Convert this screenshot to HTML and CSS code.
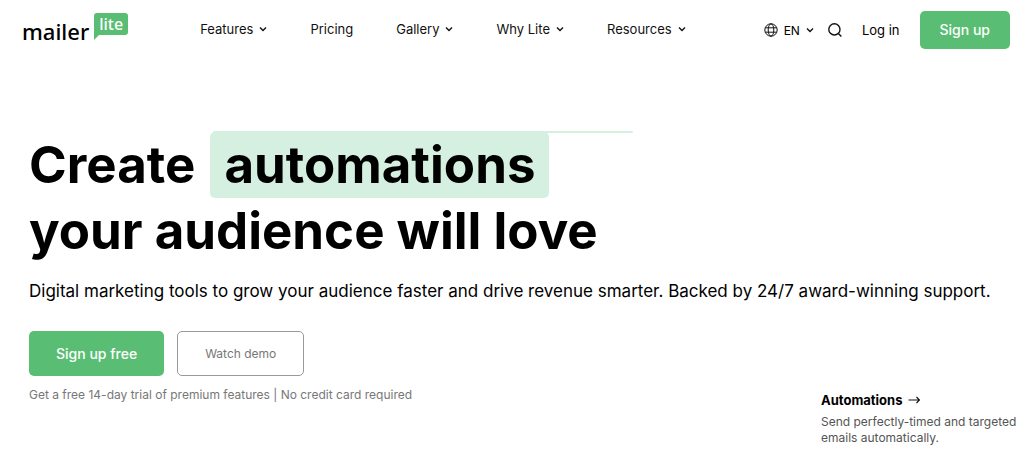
FILE: index.html
```html
<!DOCTYPE html>
<html lang="en">
<head>
    <meta charset="utf-8">
    <meta name="viewport" content="width=device-width, initial-scale=1">
    <title>MailerLite</title>
    <link rel="stylesheet" href="styles.css">
</head>
<body>
    <header class="topbar">
        <a class="logo" href="#">
            <span class="logo-name">mailer</span>
            <span class="logo-tag">lite</span>
        </a>
        <nav class="menu">
            <button class="menu-item" type="button">Features <svg class="chevron" viewBox="0 0 8 8"><path d="M1 2.5l3 3 3-3"/></svg></button>
            <a class="menu-item" href="#">Pricing</a>
            <button class="menu-item" type="button">Gallery <svg class="chevron" viewBox="0 0 8 8"><path d="M1 2.5l3 3 3-3"/></svg></button>
            <button class="menu-item" type="button">Why Lite <svg class="chevron" viewBox="0 0 8 8"><path d="M1 2.5l3 3 3-3"/></svg></button>
            <button class="menu-item" type="button">Resources <svg class="chevron" viewBox="0 0 8 8"><path d="M1 2.5l3 3 3-3"/></svg></button>
        </nav>
        <div class="tools">
            <button class="lang" type="button">
                <svg class="globe" viewBox="0 0 14 14"><circle cx="7" cy="7" r="6.2"/><ellipse cx="7" cy="7" rx="2.8" ry="6.2"/><path d="M1.3 4.8h11.4M1.3 9.2h11.4"/></svg>
                EN
                <svg class="chevron" viewBox="0 0 8 8"><path d="M1 2.5l3 3 3-3"/></svg>
            </button>
            <button class="search" type="button" aria-label="Search">
                <svg class="search-icon" viewBox="0 0 14 14"><circle cx="6.4" cy="6.4" r="5.6"/><path d="M10.4 10.4l3 3"/></svg>
            </button>
            <a class="login" href="#">Log in</a>
            <a class="btn btn-small" href="#">Sign up</a>
        </div>
    </header>

    <main class="hero">
        <h1 class="title">Create <span class="highlight">automations</span><br>your audience will love</h1>
        <p class="lead">Digital marketing tools to grow your audience faster and drive revenue smarter. Backed by 24/7 award-winning support.</p>
        <div class="actions">
            <a class="btn btn-large" href="#">Sign up free</a>
            <button class="btn-outline" type="button">Watch demo</button>
        </div>
        <div class="bottom">
            <p class="note">Get a free 14-day trial of premium features | No credit card required</p>
            <aside class="feature">
                <a class="feature-link" href="#">Automations
                    <svg class="arrow" viewBox="0 0 12 10"><path d="M0.5 5h11M8.5 2l3 3-3 3"/></svg>
                </a>
                <p class="feature-text">Send perfectly-timed and targeted emails automatically.</p>
            </aside>
        </div>
    </main>
</body>
</html>
```
FILE: styles.css
```css
* {
    box-sizing: border-box;
}
body {
    margin: 0;
    background: #fff;
    color: #000;
    font-family: Inter, "Liberation Sans", sans-serif;
    font-size: 14px;
}
a {
    color: inherit;
    text-decoration: none;
}
button {
    padding: 0;
    border: 0;
    background: none;
    color: inherit;
    font: inherit;
    cursor: pointer;
}
svg {
    flex: none;
    fill: none;
    stroke: #111;
}

/* top bar */
.topbar {
    display: flex;
    align-items: center;
    height: 60px;
    padding: 0 14px 0 22px;
}
.logo {
    display: flex;
    align-items: flex-end;
    gap: 5px;
    margin-right: 72px;
    padding-bottom: 4px;
    font-family: "Noto Sans", sans-serif;
    font-weight: 500;
}
.logo-name {
    font-size: 22px;
    line-height: 24px;
}
.logo-tag {
    position: relative;
    margin-bottom: 8px;
    padding: 0 5px;
    border-radius: 3px;
    background: #59be73;
    color: #fff;
    font-size: 16px;
    line-height: 22px;
}
.logo-tag::after {
    content: "";
    position: absolute;
    left: 0;
    bottom: -5px;
    border-top: 8px solid #59be73;
    border-right: 8px solid transparent;
}
.menu {
    display: flex;
    align-items: center;
    gap: 43px;
    padding-bottom: 2px;
    font-size: 13px;
}
.menu-item {
    display: flex;
    align-items: center;
    gap: 6px;
    color: #111;
}
.chevron {
    width: 8px;
    height: 8px;
    stroke-width: 1.4;
}
.tools {
    display: flex;
    align-items: center;
    margin-left: auto;
}
.lang {
    display: flex;
    align-items: center;
    gap: 6px;
    margin-right: 14px;
    font-size: 12px;
}
.globe {
    width: 14px;
    height: 14px;
}
.search {
    display: flex;
    margin-right: 20px;
}
.search-icon {
    width: 14px;
    height: 14px;
    stroke-width: 1.4;
}
.login {
    margin-right: 20px;
    font-size: 13px;
}

/* buttons */
.btn {
    border-radius: 5px;
    background: #59be73;
    color: #fff;
    font-weight: 500;
}
.btn-small {
    padding: 0 20px;
    line-height: 38px;
}
.btn-large {
    padding: 0 27px;
    line-height: 45px;
}
.btn-outline {
    padding: 0 27px;
    border: 1px solid #999;
    border-radius: 5px;
    color: #777;
    font-size: 12px;
}

/* hero */
.hero {
    padding: 72px 0 0 29px;
}
.title {
    margin: 0;
    font-size: 51px;
    font-weight: 700;
    line-height: 66px;
}
.highlight {
    display: inline-block;
    position: relative;
    margin-left: 3px;
    padding: 0 14px;
    border-radius: 5px;
    background: #d5f0e1;
}
/* thin line behind the top edge */
.highlight::before {
    content: "";
    position: absolute;
    top: -1px;
    left: 3px;
    width: 420px;
    height: 2px;
    border-radius: 2px;
    background: #d5f0e1;
}
.lead {
    margin: 14px 0 0;
    font-size: 17px;
    line-height: 26px;
}
.actions {
    display: flex;
    gap: 13px;
    margin-top: 27px;
}
.bottom {
    display: flex;
    justify-content: space-between;
    margin-top: 10px;
}
.note {
    margin: 0;
    color: #777;
    font-size: 12px;
    line-height: 18px;
}
.feature {
    width: 203px;
    margin-top: 4px;
}
.feature-link {
    display: flex;
    align-items: center;
    gap: 6px;
    font-size: 13px;
    font-weight: 700;
    line-height: 20px;
}
.arrow {
    width: 12px;
    height: 10px;
    stroke-width: 1.2;
}
.feature-text {
    margin: 4px 0 0;
    color: #555;
    font-size: 12px;
    line-height: 16px;
}
```
